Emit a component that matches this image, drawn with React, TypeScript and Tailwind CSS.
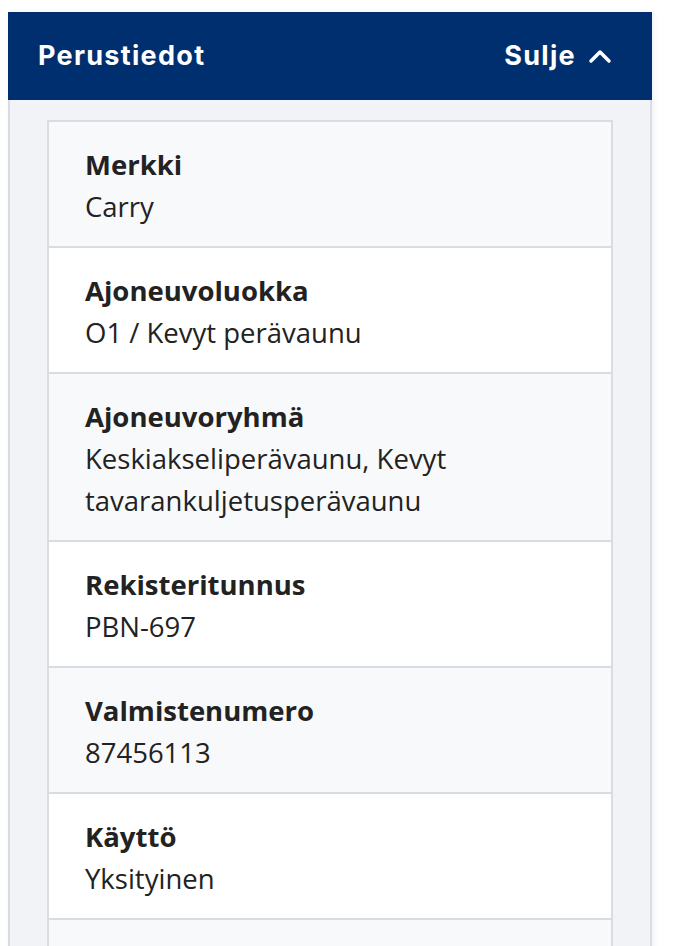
const rows = [
  { label: "Merkki", value: "Carry" },
  { label: "Ajoneuvoluokka", value: "O1 / Kevyt perävaunu" },
  { label: "Ajoneuvoryhmä", value: "Keskiakseliperävaunu, Kevyt tavarankuljetusperävaunu" },
  { label: "Rekisteritunnus", value: "PBN-697" },
  { label: "Valmistenumero", value: "87456113" },
  { label: "Käyttö", value: "Yksityinen" },
];

export default function App() {
  return (
    <div className="h-[946px] overflow-hidden bg-white pl-2 pt-3" style={{ fontFamily: "'Open Sans', 'Noto Sans', sans-serif" }}>
      <div className="w-[644px] shadow-[2px_0_6px_rgba(0,0,0,0.06)]">
        {/* otsikko */}
        <div className="flex h-[88px] items-center justify-between bg-[#002f6f] pl-[30px] pr-[40px] text-white">
          <h2 className="text-[27px] font-bold tracking-[1.3px]" style={{ fontFamily: "Inter, 'Open Sans', sans-serif" }}>
            Perustiedot
          </h2>
          <button className="flex items-center gap-[12px] text-[27px] font-bold tracking-[1.3px]" style={{ fontFamily: "Inter, 'Open Sans', sans-serif" }}>
            Sulje
            <svg width="24" height="16" viewBox="0 0 24 16" fill="none">
              <path d="M3 13L12 4L21 13" stroke="white" strokeWidth="3.5" strokeLinecap="round" strokeLinejoin="round" />
            </svg>
          </button>
        </div>

        {/* sisältö */}
        <div className="border-x-2 border-[#d9dce0] bg-[#f1f3f7] px-[37px] pt-[20px] pb-10">
          <dl className="border-2 border-[#d9dce0] text-[#222]">
            {rows.map((r, i) => (
              <div
                key={r.label}
                className={`${i > 0 ? "border-t-2 border-[#d9dce0]" : ""} ${i % 2 === 0 ? "bg-[#f8f9fb]" : "bg-white"} px-[36px] pt-[22px] pb-[18px]`}
              >
                <dt className="text-[27.5px] font-bold leading-[42px]">{r.label}</dt>
                <dd className="text-[27.5px] leading-[42px]">{r.value}</dd>
              </div>
            ))}
            <div className="h-[126px] border-t-2 border-[#d9dce0] bg-[#f8f9fb]" />
          </dl>
        </div>
      </div>
    </div>
  );
}
